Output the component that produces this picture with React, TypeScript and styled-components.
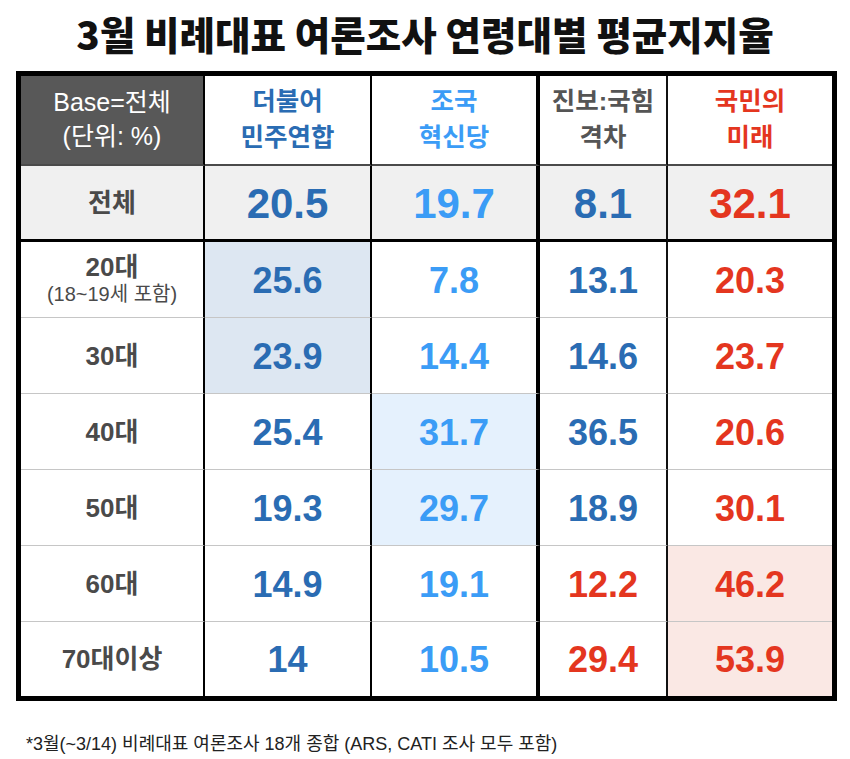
import styled, { createGlobalStyle } from "styled-components";
import { FC } from "react";

const GlobalStyle = createGlobalStyle`
  body {
    margin: 0;
    background: #fff;
    font-family: "Liberation Sans", "Noto Sans CJK KR", sans-serif;
  }
  * { box-sizing: border-box; }
`;

const Page = styled.div`
  width: 850px;
  height: 759px;
  background: #fff;
  display: flex;
  flex-direction: column;
`;

const Title = styled.h1`
  margin: 0;
  height: 71px;
  display: flex;
  align-items: center;
  justify-content: center;
  padding-bottom: 6px;
  font-family: "Noto Sans CJK KR", sans-serif;
  font-weight: 900;
  font-size: 38.6px;
  color: #111;
`;

const Table = styled.div`
  margin-left: 16px;
  width: 821px;
  border: 5px solid #000;
  display: grid;
  grid-template-columns: 184px 167px 168px 128px 164px;
  grid-template-rows: 90px 76px repeat(5, 76px) 74px;
`;

type RowKind = "head" | "total" | "body" | "last";

const rightBorders = ["2px solid #000", "2px solid #000", "4px solid #000", "2px solid #111", "none"];
const bottomBorders: Record<RowKind, string> = {
  head: "2px solid #4a4a4a",
  total: "3px solid #000",
  body: "1px solid #c6c6c6",
  last: "none",
};

const Cell = styled.div<{ $col: number; $row: RowKind; $bg?: string }>`
  display: flex;
  flex-direction: column;
  align-items: center;
  justify-content: center;
  text-align: center;
  border-right: ${(p) => rightBorders[p.$col]};
  border-bottom: ${(p) => bottomBorders[p.$row]};
  background: ${(p) => p.$bg || "#fff"};
`;

const BaseText = styled.div`
  color: #fff;
  font-size: 25px;
  line-height: 34px;
  padding-bottom: 2px;
`;

const PartyName = styled.div<{ $color: string }>`
  font-weight: 700;
  font-size: 25.5px;
  line-height: 36px;
  color: ${(p) => p.$color};
  padding-bottom: 2px;
`;

const RowLabel = styled.div`
  font-weight: 700;
  font-size: 26px;
  line-height: 30px;
  color: #4a4a4a;
`;

const SubLabel = styled.div`
  font-size: 20px;
  line-height: 24px;
  color: #4a4a4a;
  margin-bottom: 2px;
`;

const Value = styled.div<{ $color: string; $big?: boolean }>`
  font-family: "Liberation Sans", sans-serif;
  font-weight: 700;
  font-size: ${(p) => (p.$big ? "42px" : "36px")};
  color: ${(p) => p.$color};
  padding-top: 2px;
`;

const Footnote = styled.p`
  margin: 28px 0 0 26px;
  font-size: 18px;
  color: #222;
`;

const DARK_BLUE = "#2a6cb3";
const LIGHT_BLUE = "#3b9cf6";
const RED = "#e4361f";
const GRAY = "#555";

const highlight = ["#dde7f2", "#e5f1fd", "", "#fae8e4"];

const headers = [
  { lines: ["더불어", "민주연합"], color: DARK_BLUE },
  { lines: ["조국", "혁신당"], color: LIGHT_BLUE },
  { lines: ["진보:국힘", "격차"], color: GRAY },
  { lines: ["국민의", "미래"], color: RED },
];

const rows = [
  { label: "20대", sub: "(18~19세 포함)", v: ["25.6", "7.8", "13.1", "20.3"], hl: 0, gapRed: false },
  { label: "30대", v: ["23.9", "14.4", "14.6", "23.7"], hl: 0, gapRed: false },
  { label: "40대", v: ["25.4", "31.7", "36.5", "20.6"], hl: 1, gapRed: false },
  { label: "50대", v: ["19.3", "29.7", "18.9", "30.1"], hl: 1, gapRed: false },
  { label: "60대", v: ["14.9", "19.1", "12.2", "46.2"], hl: 3, gapRed: true },
  { label: "70대이상", v: ["14", "10.5", "29.4", "53.9"], hl: 3, gapRed: true },
];

const valueColor = (col: number, gapRed: boolean) => {
  if (col === 0) return DARK_BLUE;
  if (col === 1) return LIGHT_BLUE;
  if (col === 2) return gapRed ? RED : DARK_BLUE;
  return RED;
};

const App: FC = () => {
  const totals = ["20.5", "19.7", "8.1", "32.1"];

  return (
    <Page>
      <GlobalStyle />
      <Title>3월 비례대표 여론조사 연령대별 평균지지율</Title>
      <Table>
        <Cell $col={0} $row="head" $bg="#585858">
          <BaseText>
            Base=전체
            <br />
            (단위: %)
          </BaseText>
        </Cell>
        {headers.map((h, i) => (
          <Cell key={h.lines[0]} $col={i + 1} $row="head">
            <PartyName $color={h.color}>
              {h.lines[0]}
              <br />
              {h.lines[1]}
            </PartyName>
          </Cell>
        ))}

        <Cell $col={0} $row="total" $bg="#f0f0f0">
          <RowLabel>전체</RowLabel>
        </Cell>
        {totals.map((t, i) => (
          <Cell key={t} $col={i + 1} $row="total" $bg="#f0f0f0">
            <Value $big $color={valueColor(i, false)}>{t}</Value>
          </Cell>
        ))}

        {rows.map((r, ri) => {
          const kind: RowKind = ri === rows.length - 1 ? "last" : "body";
          return [
            <Cell key={r.label} $col={0} $row={kind}>
              <RowLabel>{r.label}</RowLabel>
              {r.sub && <SubLabel>{r.sub}</SubLabel>}
            </Cell>,
            ...r.v.map((v, ci) => (
              <Cell
                key={r.label + ci}
                $col={ci + 1}
                $row={kind}
                $bg={ci === r.hl ? highlight[ci] : undefined}
              >
                <Value $color={valueColor(ci, r.gapRed)}>{v}</Value>
              </Cell>
            )),
          ];
        })}
      </Table>
      <Footnote>*3월(~3/14) 비례대표 여론조사 18개 종합 (ARS, CATI 조사 모두 포함)</Footnote>
    </Page>
  );
};

export default App;
